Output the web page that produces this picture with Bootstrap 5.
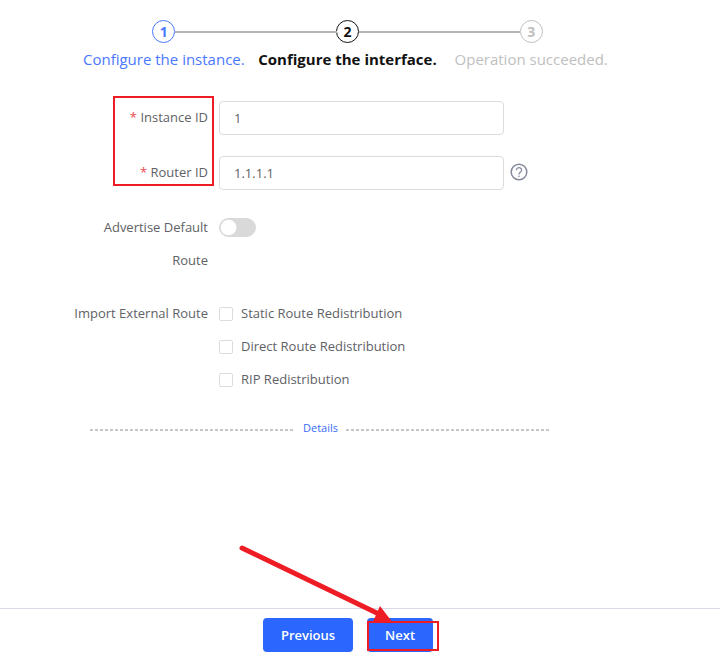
<!DOCTYPE html>
<html lang="en">
<head>
<meta charset="utf-8">
<meta name="viewport" content="width=device-width, initial-scale=1">
<title>Configure the interface</title>
<link href="https://cdn.jsdelivr.net/npm/bootstrap@5.3.0/dist/css/bootstrap.min.css" rel="stylesheet">
<style>
  body { font-family: "Open Sans", "Noto Sans", sans-serif; font-size: 13px; line-height: 33px; color: #606266; background: #fff; }
  .wizard { max-width: 551px; margin-left: 72px; padding-top: 20px; }
  .step { flex: 1 1 0; position: relative; font-size: 15px; line-height: 24px; color: #c0c0c0; white-space: nowrap; }
  .step + .step::before { content: ""; position: absolute; top: 11px; right: calc(50% + 11px); width: calc(100% - 22px); height: 2px; background: #b4b4b4; }
  .step-dot { width: 23px; height: 23px; border: 1px solid currentColor; border-radius: 50%; font-size: 14px; font-weight: 700; margin-bottom: 4px; }
  .step-done { color: #4a78ff; }
  .step-now { color: #111; font-weight: 700; }
  .fields { gap: 20px; margin-top: 30px; }
  .field { gap: 11px; }
  .field-name { width: 136px; flex: none; text-align: right; }
  .req { color: #e8494f; }
  .text-row { min-height: 35px; }
  .text-row .form-control { width: 285px; height: 34px; padding: 0 14px; border-color: #dcdcdc; border-radius: 4px; font-size: 13px; color: #606266; }
  .help { line-height: 0; margin-left: -5px; margin-top: 7px; }
  .form-check-input.toggle { width: 37px; height: 19px; margin: 7px 0 0; border-color: #d9d9d9; background-color: #d9d9d9; float: none;
    --bs-form-switch-bg: url("data:image/svg+xml,%3csvg xmlns='http://www.w3.org/2000/svg' viewBox='-4 -4 8 8'%3e%3ccircle r='3.7' fill='%23fff'/%3e%3c/svg%3e"); }
  .tick.form-check-input { width: 14px; height: 14px; margin: 0 8px 0 0; border-color: #dcdcdc; border-radius: 2px; }
  .details { margin: 22px 72px 0 18px; gap: 8px; font-size: 11px; line-height: 20px; }
  .details a { color: #3a6cf8; }
  .dashes { height: 2px; margin-top: 3px; background: repeating-linear-gradient(90deg, #c6c6c6 0 3px, transparent 3px 5px); }
  .actions { border-top: 1px solid #d8dbe6; padding: 9px 24px 0 0; gap: 14px; }
  .actions .btn { height: 34px; padding: 0 18px; font-size: 13px; font-weight: 600; line-height: 34px; border: 0; border-radius: 4px; background: #2b67ff; color: #fff; }
  .mark-box { position: absolute; border: 2px solid #ee1c25; pointer-events: none; }
  .mark-labels { left: 41px; top: -5px; width: 101px; height: 90px; }
  .mark-next { left: 0; top: 3px; width: 72px; height: 30px; }
  .mark-arrow { position: absolute; left: -130px; top: -76px; pointer-events: none; }
</style>
<script src="https://cdn.jsdelivr.net/npm/bootstrap@5.3.0/dist/js/bootstrap.bundle.min.js"></script>
</head>
<body class="d-flex flex-column min-vh-100">
<main class="wizard w-100 flex-grow-1">
  <ol class="d-flex list-unstyled mb-0">
    <li class="step step-done d-flex flex-column align-items-center"><span class="step-dot d-flex align-items-center justify-content-center">1</span>Configure the instance.</li>
    <li class="step step-now d-flex flex-column align-items-center"><span class="step-dot d-flex align-items-center justify-content-center">2</span>Configure the interface.</li>
    <li class="step d-flex flex-column align-items-center"><span class="step-dot d-flex align-items-center justify-content-center">3</span>Operation succeeded.</li>
  </ol>
  <form id="ospf" class="fields d-flex flex-column">
    <div class="position-relative d-flex flex-column fields mt-0">
      <div class="field text-row d-flex">
        <label class="field-name" for="instance"><span class="req">*</span> Instance ID</label>
        <input class="form-control" id="instance" type="text" value="1">
      </div>
      <div class="field text-row d-flex">
        <label class="field-name" for="router"><span class="req">*</span> Router ID</label>
        <input class="form-control" id="router" type="text" value="1.1.1.1">
        <span class="help"><svg width="18" height="18" viewBox="0 0 18 18" fill="none" stroke="#85899a" role="img" aria-label="Help"><circle cx="9" cy="9" r="7.8" stroke-width="1.5"/><path d="M6.4 7.2a2.6 2.5 0 1 1 4.2 1.9c-.9.7-1.6 1.100-1.600 2.300" stroke-width="1.300"/><circle cx="9" cy="13.300" r=".8" fill="#85899a" stroke="none"/></svg></span>
      </div>
      <span class="mark-box mark-labels"></span>
    </div>
    <div class="field d-flex">
      <label class="field-name" for="advertise">Advertise Default Route</label>
      <div class="form-switch p-0"><input class="form-check-input toggle d-block" id="advertise" type="checkbox" role="switch"></div>
    </div>
    <div class="field d-flex" role="group" aria-labelledby="import-name">
      <span class="field-name" id="import-name">Import External Route</span>
      <div class="d-flex flex-column">
        <div class="d-flex align-items-center"><input class="form-check-input tick" type="checkbox" id="static"><label for="static">Static Route Redistribution</label></div>
        <div class="d-flex align-items-center"><input class="form-check-input tick" type="checkbox" id="direct"><label for="direct">Direct Route Redistribution</label></div>
        <div class="d-flex align-items-center"><input class="form-check-input tick" type="checkbox" id="rip"><label for="rip">RIP Redistribution</label></div>
      </div>
    </div>
  </form>
  <div class="details d-flex align-items-center">
    <span class="dashes flex-fill"></span>
    <a href="#" class="text-decoration-none">Details</a>
    <span class="dashes flex-fill"></span>
  </div>
</main>
<footer class="actions d-flex justify-content-center">
  <button type="button" class="btn">Previous</button>
  <div class="position-relative d-flex">
    <button type="submit" form="ospf" class="btn">Next</button>
    <span class="mark-box mark-next"></span>
    <svg class="mark-arrow" width="160" height="84" viewBox="0 0 160 84" aria-hidden="true"><path d="M5 6 146 74" stroke="#ee1c25" stroke-width="5" stroke-linecap="round"/><path d="M143 64 156 81 136 79.500Z" fill="#ee1c25"/></svg>
  </div>
</footer>
</body>
</html>
